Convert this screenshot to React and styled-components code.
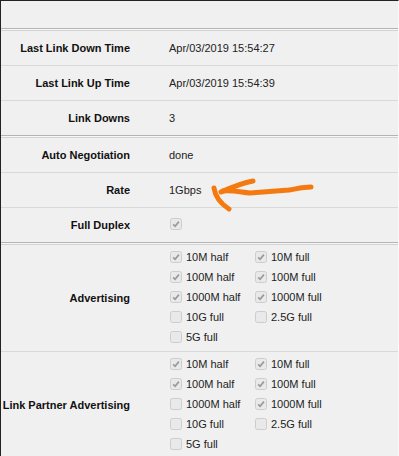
import React from "react";
import styled, { createGlobalStyle } from "styled-components";

const GlobalStyle = createGlobalStyle`
	html, body {
		margin: 0;
		padding: 0;
		background: #f0f0f0;
	}
	body {
		font-family: "Liberation Sans", Arial, sans-serif;
		font-size: 11px;
		color: #222;
	}
`;

const speeds = ["10M half", "10M full", "100M half", "100M full", "1000M half", "1000M full", "10G full", "2.5G full", "5G full"];

const advertising = [true, true, true, true, true, true, false, false, false];
const partner = [true, true, true, true, false, true, false, false, false];

const Check = ({ checked }) => (
	<Box>
		<svg width="12" height="12" viewBox="0 0 12 12">
			<rect x="0.5" y="0.5" width="11" height="11" rx="2" fill="#e9e9e9" stroke="#cdcdcd" />
			{checked && <path d="M3.2 6.3 L5.1 8.3 L8.9 3.6" fill="none" stroke="#9a9a9a" strokeWidth="1.7" />}
		</svg>
	</Box>
);

const Options = ({ values }) => (
	<OptionGrid>
		{speeds.map((s, i) => (
			<Option key={s}>
				<Check checked={values[i]} />
				<span>{s}</span>
			</Option>
		))}
	</OptionGrid>
);

const App = () => (
	<>
		<GlobalStyle />
		<Frame>
			<TopSpace />
			<GroupSep />
			<Row>
				<Label>Last Link Down Time</Label>
				<Value>Apr/03/2019 15:54:27</Value>
			</Row>
			<Row>
				<Label>Last Link Up Time</Label>
				<Value>Apr/03/2019 15:54:39</Value>
			</Row>
			<Row last>
				<Label>Link Downs</Label>
				<Value>3</Value>
			</Row>
			<GroupSep />
			<Row>
				<Label>Auto Negotiation</Label>
				<Value>done</Value>
			</Row>
			<Row>
				<Label>Rate</Label>
				<Value>1Gbps</Value>
			</Row>
			<Row last>
				<Label>Full Duplex</Label>
				<Value>
					<Check checked />
				</Value>
			</Row>
			<GroupSep />
			<Row tall>
				<Label>Advertising</Label>
				<Value>
					<Options values={advertising} />
				</Value>
			</Row>
			<Row tall last>
				<Label>Link Partner Advertising</Label>
				<Value>
					<Options values={partner} />
				</Value>
			</Row>
			{/* hand-drawn annotation over the Rate row */}
			<Arrow width="399" height="456" viewBox="0 0 399 456">
				<g fill="none" stroke="#f47a10" strokeWidth="5" strokeLinecap="round" strokeLinejoin="round">
					<path d="M311 187 C 302 187 296 189 289 190 L 250 193 C 240 192 232 190 223 191" />
					<path d="M221 192 C 230 188 242 183 253 181" />
					<path d="M214 188 C 215 195 218 202 229 209" />
				</g>
			</Arrow>
		</Frame>
	</>
);

const Frame = styled.div`
	position: relative;
	border-top: 1px solid #222;
	border-left: 1px solid #222;
	border-right: 1px solid #fafafa;
	min-height: 455px;
	overflow: hidden;
`;

const TopSpace = styled.div`
	height: 27px;
`;

const GroupSep = styled.div`
	height: 1px;
	background: #f7f7f7;
	border-top: 1px solid #b4b4b4;
	border-bottom: 1px solid #d2d2d2;
`;

const Row = styled.div`
	display: grid;
	grid-template-columns: 129px 1fr;
	column-gap: 39px;
	align-items: center;
	min-height: ${(p) => (p.tall ? "106px" : "34px")};
	border-bottom: ${(p) => (p.last ? "none" : "1px solid #d9d9d9")};
`;

const Label = styled.div`
	text-align: right;
	font-weight: bold;
	color: #111;
	white-space: nowrap;
`;

const Value = styled.div`
	color: #222;
`;

const OptionGrid = styled.div`
	display: grid;
	grid-template-columns: 85px 85px;
	grid-auto-rows: 20px;
	padding: 2px 0 4px;
`;

const Option = styled.label`
	display: flex;
	align-items: center;
	gap: 4px;
	white-space: nowrap;
`;

const Box = styled.span`
	display: inline-flex;
	width: 12px;
	height: 12px;
	margin-left: 1px;
`;

const Arrow = styled.svg`
	position: absolute;
	left: -1px;
	top: -1px;
	pointer-events: none;
`;

export default App;
